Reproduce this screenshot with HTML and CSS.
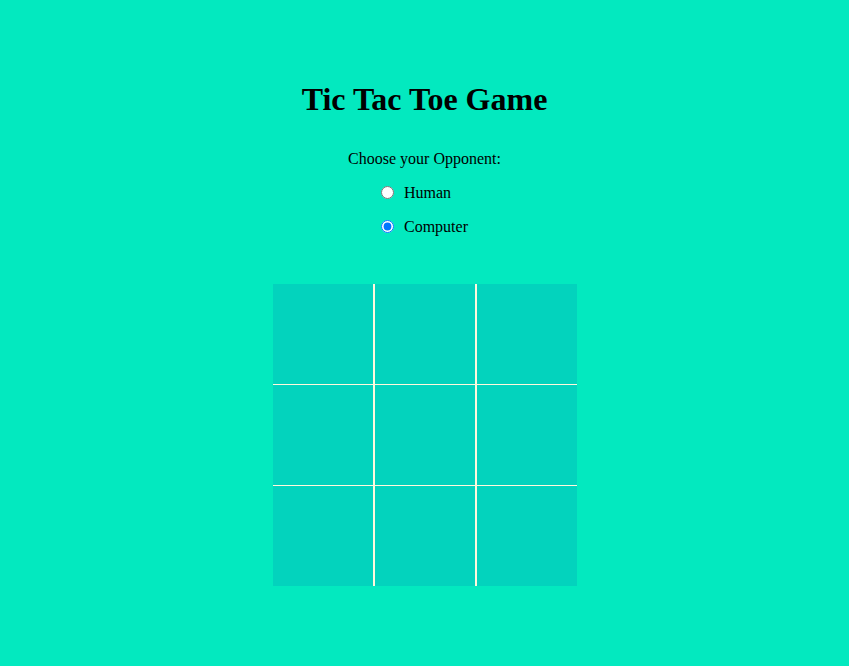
FILE: index.html
```html
<!DOCTYPE html>
<html lang="en">
<head>
<meta charset="utf-8">
<title>Tic Tac Toe Game</title>
<link rel="stylesheet" href="styles.css">
</head>
<body>
<main class="page">
  <h1 class="title">Tic Tac Toe Game</h1>
  <p class="prompt">Choose your Opponent:</p>
  <div class="options">
    <label class="option"><input type="radio" name="opponent" value="human"><span>Human</span></label>
    <label class="option"><input type="radio" name="opponent" value="computer" checked><span>Computer</span></label>
  </div>
  <div class="board">
    <div class="cell"></div><div class="cell"></div><div class="cell"></div>
    <div class="cell"></div><div class="cell"></div><div class="cell"></div>
    <div class="cell"></div><div class="cell"></div><div class="cell"></div>
  </div>
</main>
</body>
</html>
```
FILE: styles.css
```css
html, body {
  margin: 0;
  padding: 0;
  background: #03e9bf;
  height: 100%;
}
body {
  font-family: "Liberation Serif", "Times New Roman", serif;
  color: #000;
}
.page {
  display: flex;
  flex-direction: column;
  align-items: center;
  padding-top: 81px;
}
.title {
  margin: 0;
  font-size: 32px;
  line-height: 37px;
  font-weight: bold;
}
.prompt {
  margin: 32px 0 0;
  font-size: 16px;
  line-height: 18px;
}
.options {
  display: flex;
  flex-direction: column;
  align-items: flex-start;
  margin-top: 8px;
}
.option {
  display: flex;
  align-items: center;
  height: 34px;
  font-size: 16px;
}
.option input {
  margin: 0 10px 2px 0;
  width: 13px;
  height: 13px;
}
.board {
  margin-top: 40px;
  display: grid;
  grid-template-columns: repeat(3, 100px);
  grid-template-rows: repeat(3, 100px);
  column-gap: 2px;
  row-gap: 1px;
  background: #fff8dc;
}
.cell {
  background: #03d3bd;
}
```
